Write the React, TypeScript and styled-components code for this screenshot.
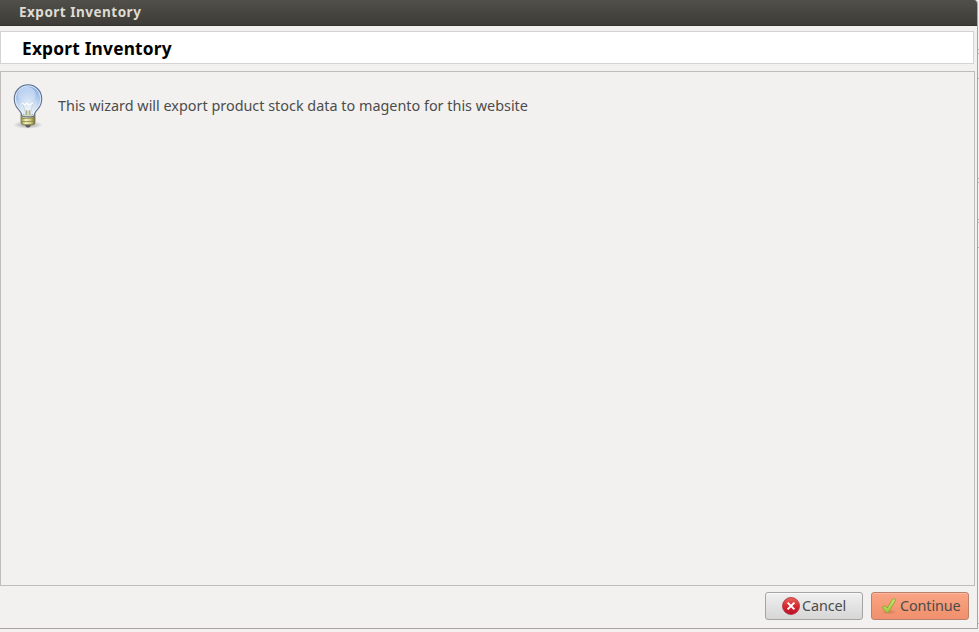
import React from "react";
import styled, { createGlobalStyle } from "styled-components";

const GlobalStyle = createGlobalStyle`
  * { box-sizing: border-box; }
  body { margin: 0; background: #f4f3f2; overflow: hidden; }
`;

const Desktop = styled.div`
  display: flex;
  width: 979px;
  height: 632px;
  background: #f2f1f0;
  font-family: "Noto Sans", "Open Sans", sans-serif;
  color: #4c4c4c;
`;

const Window = styled.main`
  display: flex;
  flex-direction: column;
  width: 978px;
  height: 629px;
  border-right: 1px solid #a9a6a1;
  border-bottom: 1px solid #a9a6a1;
  border-top-right-radius: 4px;
  background: #f2f1f0;
  overflow: hidden;
`;

const TitleBar = styled.header`
  flex: none;
  height: 26px;
  width: 978px;
  padding-left: 19px;
  border-bottom: 1px solid #33322e;
  background: linear-gradient(#504f49, #3d3c37);
  color: #dfdbd2;
  font-size: 13.5px;
  font-weight: 700;
  line-height: 24px;
  letter-spacing: 0.5px;
  white-space: nowrap;
`;

const Heading = styled.h1`
  flex: none;
  width: 974px;
  height: 33px;
  margin: 5px 0 7px;
  padding-left: 21px;
  border: 1px solid #d5d3d1;
  background: #fff;
  color: #000;
  font-size: 17.3px;
  font-weight: 700;
  line-height: 33px;
  letter-spacing: 0.22px;
  white-space: nowrap;
`;

const Content = styled.section`
  flex: none;
  display: flex;
  align-items: flex-start;
  width: 975px;
  height: 515px;
  padding: 10px 0 0 3px;
  border: 1px solid #bfbdb9;
`;

const Message = styled.p`
  margin: 14px 0 0 6px;
  font-size: 14.4px;
  line-height: 20px;
  letter-spacing: 0;
  white-space: nowrap;
`;

const Actions = styled.footer`
  display: flex;
  justify-content: flex-end;
  gap: 8px;
  padding: 6px 8px 0 0;
`;

const Button = styled.button<{ $primary?: boolean }>`
  display: flex;
  align-items: center;
  width: 98px;
  height: 28px;
  padding: 0 0 0 ${(p) => (p.$primary ? 6 : 14)}px;
  border: 1px solid ${(p) => (p.$primary ? "#b9806a" : "#a5a4a3")};
  border-radius: 3px;
  background: ${(p) =>
    p.$primary
      ? "linear-gradient(#f9a587, #f59772 60%, #f19070)"
      : "linear-gradient(#f1f1f1, #e3e3e3 50%, #d6d6d6)"};
  box-shadow: inset 0 1px 0 ${(p) => (p.$primary ? "#fcb89e" : "#fafafa")};
  color: #4c4c4c;
  font: 14.4px/20px "Noto Sans", sans-serif;
  letter-spacing: -0.12px;
  white-space: nowrap;
`;

const Glyph = styled.svg`
  flex: none;
  display: block;
`;

const BulbIcon = () => (
  <Glyph width="48" height="48" viewBox="0 0 48 48">
    <defs>
      <radialGradient id="glass" cx="0.5" cy="0.8" r="0.8">
        <stop offset="0" stopColor="#f3f7fb" />
        <stop offset="0.4" stopColor="#cfe0f4" />
        <stop offset="1" stopColor="#7fa8e0" />
      </radialGradient>
      <linearGradient id="shine" x1="0" y1="0" x2="0" y2="1">
        <stop offset="0" stopColor="#eef5ff" stopOpacity="0.5" />
        <stop offset="1" stopColor="#fff" stopOpacity="0.1" />
      </linearGradient>
      <linearGradient id="brass" x1="0" x2="1">
        <stop offset="0" stopColor="#99944c" />
        <stop offset="0.35" stopColor="#f6f4c0" />
        <stop offset="0.7" stopColor="#cfca7c" />
        <stop offset="1" stopColor="#716d38" />
      </linearGradient>
      <radialGradient id="shade">
        <stop offset="0" stopColor="#000" stopOpacity="0.35" />
        <stop offset="1" stopColor="#000" stopOpacity="0" />
      </radialGradient>
    </defs>
    <ellipse cx="24" cy="42.8" rx="15" ry="4" fill="url(#shade)" />
    <path d="M20.5 42h7l-1.6 3q-1.9 1-3.8 0z" fill="#5a5c5c" />
    <path d="M17 32h14v8.4q0 2.4-3 2.4h-8q-3 0-3-2.4z" fill="url(#brass)" stroke="#77754a" strokeWidth="0.8" />
    <path d="M17.4 36.6l13-.6M17.4 39.8l13-.6" stroke="#858148" strokeWidth="0.8" />
    <path d="M18 34c-.4-3.5-2.2-5-4.2-7.4-2.2-2.6-3.5-5.8-3.5-9.9C10.3 9 16.1 2.8 24 2.8S37.7 9 37.7 16.7c0 4.1-1.3 7.3-3.5 9.9-2 2.4-3.8 3.9-4.2 7.4q-6 1.8-12 0z" fill="url(#glass)" stroke="#66718c" strokeWidth="1.1" />
    <path d="M18.9 33c-.4-3.3-2.3-4.9-4.2-7.1-2.1-2.5-3.2-5.4-3.2-9.2C11.5 9.6 16.9 4 24 4s12.5 5.6 12.5 12.7c0 3.8-1.1 6.7-3.2 9.2-1.9 2.2-3.8 3.8-4.2 7.1" fill="none" stroke="#e8f1fc" strokeWidth="0.9" />
    <ellipse cx="22.7" cy="12.5" rx="9" ry="7.7" fill="url(#shine)" />
    <path d="M18.8 22l2.8 9M29.2 21l-2.8 10" stroke="#c3c9c4" strokeWidth="0.7" />
    <path d="M18 21l3 2 2-2 2 2 4-2" fill="none" stroke="#fff" strokeWidth="1.2" />
    <path d="M19 33.5q2.5-1 3-5h4q.5 4 3 5-5 1.2-10 0z" fill="#d3d7bd" />
    <path d="M22.3 28v5M25.7 28v5M20 32l-1 1.3M28 32l1 1.3" stroke="#8b907e" strokeWidth="0.7" />
  </Glyph>
);

const CancelIcon = () => (
  <Glyph width="22" height="22" viewBox="0 0 22 22">
    <defs>
      <linearGradient id="red" x1="0" y1="0" x2="0" y2="1">
        <stop offset="0" stopColor="#ea6660" />
        <stop offset="0.5" stopColor="#d7292f" />
        <stop offset="1" stopColor="#b90e26" />
      </linearGradient>
    </defs>
    <circle cx="11" cy="11" r="8.5" fill="url(#red)" stroke="#b0303c" strokeWidth="0.8" />
    <path d="M7.6 7.6l6.8 6.8M14.4 7.6l-6.8 6.8" stroke="#fff" strokeWidth="2" />
  </Glyph>
);

const CheckIcon = () => (
  <Glyph width="22" height="22" viewBox="0 0 22 22">
    <defs>
      <linearGradient id="green" x1="0" y1="0" x2="0" y2="1">
        <stop offset="0" stopColor="#cbe874" />
        <stop offset="1" stopColor="#a0cb3c" />
      </linearGradient>
      <radialGradient id="checkShade">
        <stop offset="0" stopColor="#7a4a20" stopOpacity="0.3" />
        <stop offset="1" stopColor="#7a4a20" stopOpacity="0" />
      </radialGradient>
    </defs>
    <ellipse cx="11" cy="17" rx="8" ry="2.5" fill="url(#checkShade)" />
    <path d="M4.2 12.4l3-1.7 2 2.3 5.3-8.6q1.8-1.4 3.4.1l-7.2 12.3q-1.4 1.3-2.6.3z" fill="url(#green)" stroke="#829f35" strokeWidth="0.8" strokeLinejoin="round" />
  </Glyph>
);

const Edge = styled.aside`
  display: flex;
  flex-direction: column;
  width: 1px;
  height: 632px;
  padding-top: 49px;
`;

const Tick = styled.i<{ $gap: number }>`
  flex: none;
  height: 1px;
  margin-bottom: ${(p) => p.$gap}px;
  background: #b5b3b0;
`;

export default function App() {
  return (
    <Desktop>
      <GlobalStyle />
      <Window>
        <TitleBar>Export Inventory</TitleBar>
        <Heading>Export Inventory</Heading>
        <Content>
          <BulbIcon />
          <Message>This wizard will export product stock data to magento for this website</Message>
        </Content>
        <Actions>
          <Button><CancelIcon />Cancel</Button>
          <Button $primary><CheckIcon />Continue</Button>
        </Actions>
      </Window>
      <Edge>
        {[3, 24, 99, 3, 36, 2, 24, 375, 3].map((gap, i) => (
          <Tick key={i} $gap={gap} />
        ))}
      </Edge>
    </Desktop>
  );
}
